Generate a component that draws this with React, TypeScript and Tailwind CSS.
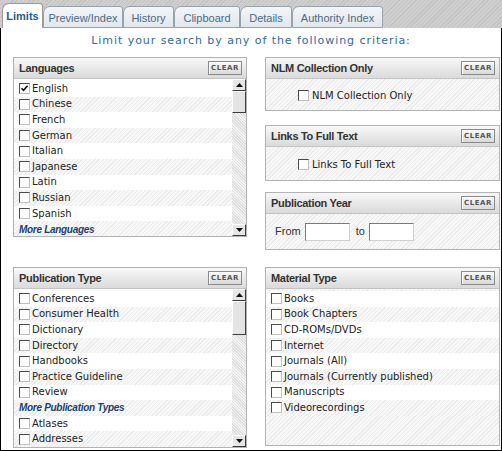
import React from 'react';

const hatch =
  'bg-[repeating-linear-gradient(135deg,#ebebeb_0px,#ebebeb_1px,#f8f8f8_1px,#f8f8f8_3px)]';

const tabs = [
  { label: 'Limits', w: 'w-[41px]', active: true },
  { label: 'Preview/Index', w: 'w-[80px]' },
  { label: 'History', w: 'w-[51px]' },
  { label: 'Clipboard', w: 'w-[66px]' },
  { label: 'Details', w: 'w-[52px]' },
  { label: 'Authority Index', w: 'w-[91px]' },
];

const Checkbox = ({ checked = false }: { checked?: boolean }) => (
  <span className="relative inline-block w-[11px] h-[11px] shrink-0 bg-white border border-t-[#4a4a4a] border-l-[#4a4a4a] border-b-[#c0c0c0] border-r-[#c0c0c0]">
    {checked && (
      <svg viewBox="0 0 9 9" className="absolute inset-0 w-[9px] h-[9px]">
        <path d="M1.5 4.2 L3.5 6.3 L7.6 1.8" fill="none" stroke="#111" strokeWidth="1.6" />
      </svg>
    )}
  </span>
);

const ClearButton = () => (
  <div className="w-[34px] h-[14px] border border-[#8a8a8a] bg-gradient-to-b from-[#fafafa] to-[#d9d9d9] flex items-center justify-center shadow-[inset_1px_1px_0_#fff]">
    <span className="text-[7px] font-bold tracking-[0.6px] text-[#555] leading-none font-['DejaVu_Sans',sans-serif]">
      CLEAR
    </span>
  </div>
);

const Panel = ({
  title,
  className,
  children,
}: {
  title: string;
  className: string;
  children: React.ReactNode;
}) => (
  <div className={`flex flex-col border border-[#b3b3b3] bg-white overflow-hidden ${className}`}>
    <div className="h-[21px] shrink-0 flex items-center justify-between pl-[5px] pr-[4px] border-b border-[#c4c4c4] bg-gradient-to-b from-[#f8f8f8] to-[#dadada]">
      <span className="text-[11px] font-bold tracking-[-0.3px] text-[#333] font-['Liberation_Sans',Arial,sans-serif]">
        {title}
      </span>
      <ClearButton />
    </div>
    {children}
  </div>
);

const ScrollButton = ({ up }: { up?: boolean }) => (
  <div className="h-[12px] shrink-0 flex items-center justify-center bg-[#e6e6e6] border border-t-white border-l-white border-b-[#3c3c3c] border-r-[#3c3c3c]">
    <svg viewBox="0 0 7 4" className="w-[7px] h-[4px]">
      {up ? <path d="M0 4 L3.5 0 L7 4 Z" fill="#111" /> : <path d="M0 0 L3.5 4 L7 0 Z" fill="#111" />}
    </svg>
  </div>
);

const Scrollbar = ({ thumbHeight }: { thumbHeight: string }) => (
  <div className="w-[14px] shrink-0 flex flex-col bg-[repeating-linear-gradient(45deg,#dedede_0px,#dedede_1px,#f4f4f4_1px,#f4f4f4_2px)]">
    <ScrollButton up />
    <div className="flex-1 flex flex-col">
      <div
        className={`${thumbHeight} bg-[#e4e4e4] border border-t-white border-l-white border-b-[#3c3c3c] border-r-[#3c3c3c]`}
      />
    </div>
    <ScrollButton />
  </div>
);

type Row = { label: string; checked?: boolean; more?: boolean };

const Rows = ({ rows }: { rows: Row[] }) => (
  <>
    {rows.map((r, i) => (
      <div
        key={r.label}
        className={`h-[15.6px] shrink-0 flex items-center pl-[5px] gap-[2px] ${i % 2 === 1 ? hatch : 'bg-white'}`}
      >
        {r.more ? (
          <span className="text-[10px] font-bold italic text-[#1d3f6e] tracking-[-0.3px] font-['Liberation_Sans',Arial,sans-serif]">
            {r.label}
          </span>
        ) : (
          <>
            <Checkbox checked={r.checked} />
            <span className="text-[10px] text-[#222] leading-none">{r.label}</span>
          </>
        )}
      </div>
    ))}
  </>
);

const languages: Row[] = [
  { label: 'English', checked: true },
  { label: 'Chinese' },
  { label: 'French' },
  { label: 'German' },
  { label: 'Italian' },
  { label: 'Japanese' },
  { label: 'Latin' },
  { label: 'Russian' },
  { label: 'Spanish' },
  { label: 'More Languages', more: true },
];

const pubTypes: Row[] = [
  { label: 'Conferences' },
  { label: 'Consumer Health' },
  { label: 'Dictionary' },
  { label: 'Directory' },
  { label: 'Handbooks' },
  { label: 'Practice Guideline' },
  { label: 'Review' },
  { label: 'More Publication Types', more: true },
  { label: 'Atlases' },
  { label: 'Addresses' },
];

const materials: Row[] = [
  { label: 'Books' },
  { label: 'Book Chapters' },
  { label: 'CD-ROMs/DVDs' },
  { label: 'Internet' },
  { label: 'Journals (All)' },
  { label: 'Journals (Currently published)' },
  { label: 'Manuscripts' },
  { label: 'Videorecordings' },
];

const YearInput = () => (
  <div className="w-[45px] h-[18px] bg-white border border-t-[#7a7a7a] border-l-[#7a7a7a] border-b-[#d0d0d0] border-r-[#d0d0d0]" />
);

export default function App() {
  return (
    <div className="w-[502px] h-[451px] overflow-hidden bg-white flex flex-col font-['DejaVu_Sans',Verdana,sans-serif]">
      {/* tab strip */}
      <div className="h-[28px] shrink-0 flex items-end pl-[2px] bg-[repeating-linear-gradient(135deg,#c3c3c3_0px,#c3c3c3_1px,#cfcfcf_1px,#cfcfcf_3px)] font-['Liberation_Sans',Arial,sans-serif]">
        {tabs.map((t) =>
          t.active ? (
            <div
              key={t.label}
              className={`${t.w} h-[25px] flex items-center justify-center bg-white border border-b-0 border-[#9a9a9a] rounded-tl-[7px] rounded-tr-[3px] text-[11px] font-bold text-[#1f5a94]`}
            >
              {t.label}
            </div>
          ) : (
            <div
              key={t.label}
              className={`${t.w} h-[22px] flex items-center justify-center bg-gradient-to-b from-[#f3f5f8] to-[#e2e7ec] border border-[#98a2ae] rounded-tl-[7px] rounded-tr-[3px] text-[11px] text-[#4a6b8a] pt-[2px]`}
            >
              {t.label}
            </div>
          ),
        )}
      </div>

      {/* content */}
      <div className="flex-1 flex flex-col border-l border-r border-b border-black bg-white">
        <div className="h-[29px] shrink-0 pt-[6px] text-center text-[11px] leading-[14px] tracking-[0.95px] text-[#2f6aa3]">
          Limit your search by any of the following criteria:
        </div>

        <div className="pl-[12px] grid grid-cols-[234px_235px] grid-rows-[193px_auto] gap-x-[18px] gap-y-[17px]">
          <Panel title="Languages" className="h-[180px]">
            <div className="flex flex-1 min-h-0">
              <div className="flex-1 flex flex-col overflow-hidden pt-[2px]">
                <Rows rows={languages} />
              </div>
              <Scrollbar thumbHeight="h-[22px]" />
            </div>
          </Panel>

          <div className="flex flex-col">
            <Panel title="NLM Collection Only" className="h-[54px]">
              <div className={`flex-1 flex items-center pl-[32px] pt-[2px] gap-[3px] ${hatch}`}>
                <Checkbox />
                <span className="text-[10px] text-[#222]">NLM Collection Only</span>
              </div>
            </Panel>
            <Panel title="Links To Full Text" className="h-[56px] mt-[14px]">
              <div className={`flex-1 flex items-center pl-[32px] pt-[2px] gap-[3px] ${hatch}`}>
                <Checkbox />
                <span className="text-[10px] text-[#222]">Links To Full Text</span>
              </div>
            </Panel>
            <Panel title="Publication Year" className="h-[58px] mt-[11px]">
              <div
                className={`flex-1 flex items-center pl-[9px] text-[11px] text-[#333] font-['Liberation_Sans',Arial,sans-serif] ${hatch}`}
              >
                <span>From</span>
                <span className="ml-[4px]">
                  <YearInput />
                </span>
                <span className="ml-[6px]">to</span>
                <span className="ml-[4px]">
                  <YearInput />
                </span>
              </div>
            </Panel>
          </div>

          <Panel title="Publication Type" className="h-[181px]">
            <div className="flex flex-1 min-h-0">
              <div className="flex-1 flex flex-col overflow-hidden pt-[2px]">
                <Rows rows={pubTypes} />
              </div>
              <Scrollbar thumbHeight="h-[34px]" />
            </div>
          </Panel>

          <Panel title="Material Type" className="h-[179px]">
            <div className={`flex-1 flex flex-col pt-[2px] ${hatch}`}>
              <Rows rows={materials} />
            </div>
          </Panel>
        </div>
      </div>
    </div>
  );
}
